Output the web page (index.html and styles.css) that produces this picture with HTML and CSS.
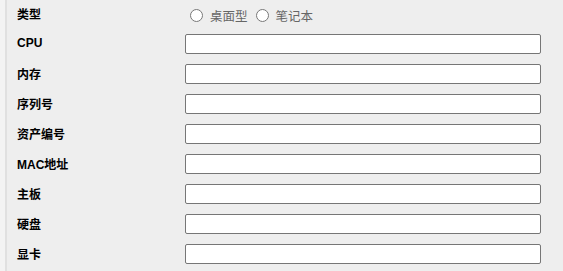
FILE: index.html
```html
<!DOCTYPE html>
<html lang="zh-CN">
<head>
    <meta charset="UTF-8">
    <title>设备信息</title>
    <link rel="stylesheet" href="styles.css">
</head>
<body>
    <div class="panel">
        <div class="row first">
            <label class="label">类型</label>
            <div class="radios">
                <label class="radio"><input type="radio" name="type">桌面型</label>
                <label class="radio"><input type="radio" name="type">笔记本</label>
            </div>
        </div>
        <div class="row"><label class="label">CPU</label><input type="text" class="field"></div>
        <div class="row"><label class="label">内存</label><input type="text" class="field"></div>
        <div class="row"><label class="label">序列号</label><input type="text" class="field"></div>
        <div class="row"><label class="label">资产编号</label><input type="text" class="field"></div>
        <div class="row"><label class="label">MAC地址</label><input type="text" class="field"></div>
        <div class="row"><label class="label">主板</label><input type="text" class="field"></div>
        <div class="row"><label class="label">硬盘</label><input type="text" class="field"></div>
        <div class="row"><label class="label">显卡</label><input type="text" class="field"></div>
    </div>
</body>
</html>
```

FILE: styles.css
```css
body {
    margin: 0;
    background-color: #f3f3f3;
    font-family: "Liberation Sans", "Noto Sans CJK SC", sans-serif;
    font-size: 12px;
}

.panel {
    margin-left: 5px;
    border-left: 2px solid #e0e0e0;
    background-color: #eeeeee;
    padding-left: 10px;
    height: 271px;
    overflow: hidden;
}

.row {
    display: flex;
    align-items: center;
    height: 30px;
}

.row.first {
    height: 29px;
}

.label {
    width: 168px;
    font-weight: bold;
    color: #000;
    padding-bottom: 2px;
}

.radios {
    display: flex;
    align-items: center;
    padding-top: 1px;
}

.radio {
    display: flex;
    align-items: center;
    color: #666;
    font-size: 12.5px;
    margin-right: 3px;
}

.radio input {
    margin: 0 7px 0 5px;
    width: 13px;
    height: 13px;
}

.field {
    width: 356px;
    height: 20px;
    box-sizing: border-box;
    border: 1px solid #767676;
    border-radius: 2px;
    background-color: #fff;
    margin: 0;
    padding: 0 4px;
}
```
